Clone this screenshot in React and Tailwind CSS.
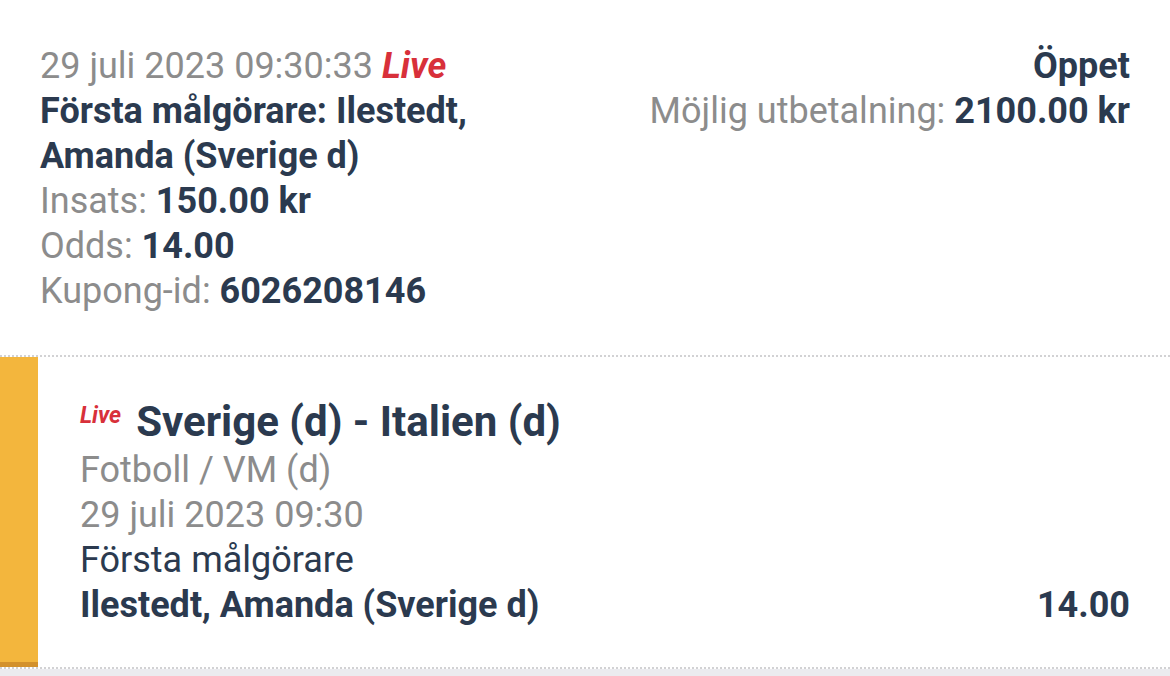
import React from 'react';

const bet = {
  placed: '29 juli 2023 09:30:33',
  title: 'Första målgörare: Ilestedt, Amanda (Sverige d)',
  stake: '150.00 kr',
  odds: '14.00',
  couponId: '6026208146',
  status: 'Öppet',
  payout: '2100.00 kr',
};

const event = {
  name: 'Sverige (d) - Italien (d)',
  league: 'Fotboll / VM (d)',
  start: '29 juli 2023 09:30',
  market: 'Första målgörare',
  selection: 'Ilestedt, Amanda (Sverige d)',
  odds: '14.00',
};

export default function App() {
  return (
    <div className="w-[1170px] h-[676px] overflow-hidden bg-[#ebebef] font-['Roboto','Liberation_Sans',sans-serif] text-[36px] leading-[45px] text-[#2b3a4f]">
      {/* Coupon summary */}
      <div className="flex justify-between bg-white px-10 pt-[44px] pb-[41px] border-b-2 border-dotted border-[#d2d2d4]">
        <div className="w-[470px]">
          <div className="text-[#8c8c8c]">
            {bet.placed} <span className="font-bold italic text-[#d8303a]">Live</span>
          </div>
          <div className="font-bold">{bet.title}</div>
          <div className="text-[#8c8c8c]">
            Insats: <span className="font-bold text-[#2b3a4f]">{bet.stake}</span>
          </div>
          <div className="text-[#8c8c8c]">
            Odds: <span className="font-bold text-[#2b3a4f]">{bet.odds}</span>
          </div>
          <div className="text-[#8c8c8c]">
            Kupong-id: <span className="font-bold text-[#2b3a4f]">{bet.couponId}</span>
          </div>
        </div>
        <div className="text-right">
          <div className="font-bold">{bet.status}</div>
          <div className="text-[#8c8c8c]">
            Möjlig utbetalning: <span className="font-bold text-[#2b3a4f]">{bet.payout}</span>
          </div>
        </div>
      </div>

      {/* Selection */}
      <div className="flex bg-white border-b-2 border-dotted border-[#d2d2d4]">
        <div className="w-[38px] shrink-0 bg-[#f3b63d] border-b-[5px] border-[#d3912c]" />
        <div className="flex-1 pl-[42px] pr-10 pt-[39px] pb-[39px]">
          <div className="flex items-start leading-[52px]">
            <span className="mt-[-6px] mr-[15px] text-[23px] font-bold italic text-[#d8303a]">Live</span>
            <span className="text-[42px] font-bold">{event.name}</span>
          </div>
          <div className="text-[#8c8c8c]">{event.league}</div>
          <div className="text-[#8c8c8c]">{event.start}</div>
          <div>{event.market}</div>
          <div className="flex justify-between font-bold">
            <span>{event.selection}</span>
            <span>{event.odds}</span>
          </div>
        </div>
      </div>
    </div>
  );
}
